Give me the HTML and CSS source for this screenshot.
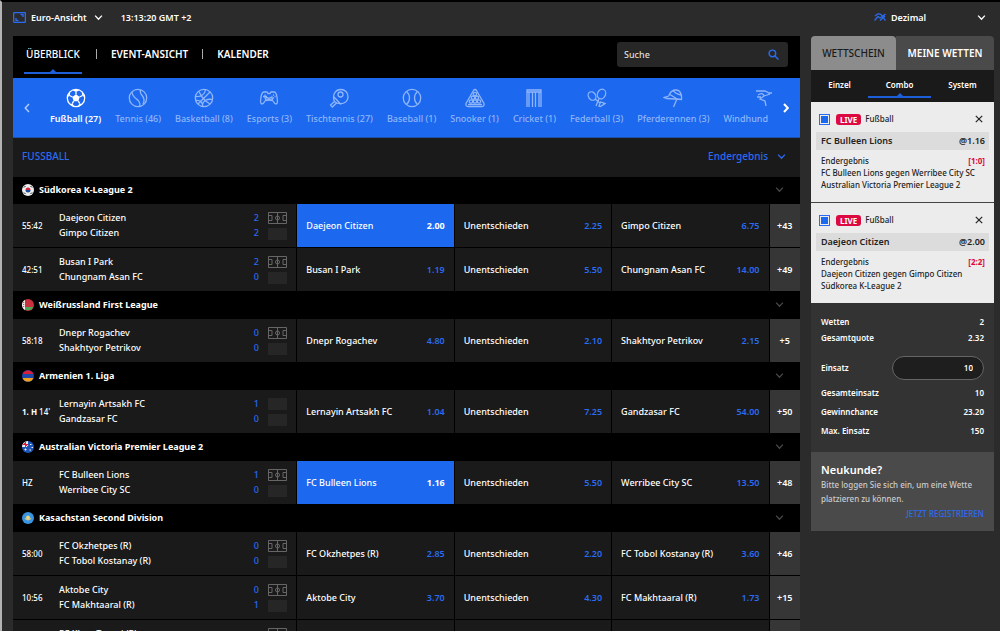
FILE: index.html
```html
<!DOCTYPE html>
<html lang="de">
<head>
<meta charset="utf-8">
<title>Sportwetten – Überblick</title>
<link rel="stylesheet" href="styles.css">
</head>
<body>
<svg class="sprite" aria-hidden="true">
  <symbol id="chev-down" viewBox="0 0 8 8"><path d="M1 2.3l3 3.2 3-3.2"/></symbol>
  <symbol id="close" viewBox="0 0 8 8"><path d="M.8.8l6.4 6.4M7.2.8L.8 7.2"/></symbol>
  <symbol id="pitch" viewBox="0 0 19 12"><path d="M.5.5h18v11H.5zM9.500.5v11M.5 3.500h3.500v5H.5M18.500 3.500H15v5h3.500M7.500 6a2 2 0 1 0 4 0a2 2 0 1 0-4 0"/></symbol>
</svg>
<div class="app">
  <header class="topbar">
    <button class="view-switch">
      <svg class="view-icon" viewBox="0 0 13 11"><rect x=".6" y=".6" width="11.800" height="9.800" rx="1"/><path d="M3 6v2.500h2.500M10 5V2.500H7.500"/></svg>
      Euro-Ansicht
      <svg class="chev"><use href="#chev-down"/></svg>
    </button>
    <time class="clock">13:13:20 GMT +2</time>
    <button class="odds-switch">
      <svg class="odds-icon" viewBox="0 0 12 8"><path d="M.5 7.500L4 3.500l2 1.500 5.500-4M1 3l2.500-2c3-.5 4.500 1 5.500 3.500l2.500 3M6 7.500L11 3"/></svg>
      Dezimal
      <svg class="chev"><use href="#chev-down"/></svg>
    </button>
  </header>

  <div class="columns">
    <main class="board">
      <div class="board-nav">
        <nav class="tabs">
          <a class="tab active" href="#">ÜBERBLICK</a>
          <a class="tab" href="#">EVENT-ANSICHT</a>
          <a class="tab" href="#">KALENDER</a>
        </nav>
        <label class="search">
          <input type="text" placeholder="Suche" aria-label="Suche">
          <svg viewBox="0 0 10 10"><circle cx="4" cy="4" r="3"/><path d="M6.300 6.300L9.500 9.500"/></svg>
        </label>
      </div>

      <div class="sports">
        <button class="arrow" aria-label="Zurück"><svg viewBox="0 0 6 10"><path d="M5 1L1.200 5 5 9"/></svg></button>
        <div class="sport-list">
          <button class="sport active"><svg viewBox="0 0 20 20"><circle cx="10" cy="10" r="8.700"/><path class="fill" d="M10 6.200l3.700 2.700-1.400 4.300H7.700L6.300 8.900zM6.500 2.200L10 4l3.500-1.800A9 9 0 0 0 6.500 2.200M1.300 9.500l2.500-2 .5-3.500a9 9 0 0 0-3 5.500M18.700 9.500l-2.500-2-.5-3.500a9 9 0 0 1 3 5.500M3.300 15.500l3.500.4 1.500 2.600a9 9 0 0 1-5-3M16.700 15.500l-3.500.4-1.500 2.600a9 9 0 0 0 5-3"/><path d="M10 6.500V4M13.500 9l3-1.500M12.300 13.200l1.500 2.500M7.700 13.200l-1.500 2.500M6.500 9l-3-1.500"/></svg>Fußball (27)</button>
          <button class="sport"><svg viewBox="0 0 20 20"><circle cx="10" cy="10" r="8.700"/><path d="M4 4c0 5 5 6.500 7 9.500 1 1.500 1 3.500.5 5M12.500 1.800c-1 3 .5 4.500 2 6.200 2 2.500 1.500 6 .5 8"/></svg>Tennis (46)</button>
          <button class="sport"><svg viewBox="0 0 20 20"><circle cx="10" cy="10" r="8.700"/><path d="M4 16L16 4M1.500 8.500C7 9 11 6.500 11.500 1.500M8.500 18.500C8 13 13 10.500 18.700 11.500M5 3.500c2 5 5 9 11 12.500M1.500 12.500C6 12 8.500 14 9 18.500"/></svg>Basketball (8)</button>
          <button class="sport"><svg viewBox="0 0 20 20"><path d="M5 4h3l1 1.500h2L12 4h3c2 0 2.500 2 3 5 .5 3.500 1 7-1 7s-2.500-3.500-4-4H7c-1.500.5-2 4-4 4s-1.500-3.500-1-7c.5-3 1-5 3-5zM6 6.500v4M4 8.500h4M12.500 8.500h1M15.500 8.500h1M14 7h1M14 10h1"/><circle cx="8" cy="11" r="1.500"/><circle cx="12" cy="11" r="1.500"/></svg>Esports (3)</button>
          <button class="sport"><svg viewBox="0 0 20 20"><path d="M5.500 13.500C3 8 5.500 1.500 12 1.500c4 0 7 3 7 7 0 6-6 8.500-11 6.500zM5.500 13.500l-4 3.500 1.800 2L7.500 15M5 9l7 7.500"/><circle cx="11.500" cy="6.500" r="2.500"/></svg>Tischtennis (27)</button>
          <button class="sport"><svg viewBox="0 0 20 20"><circle cx="10" cy="10" r="8.700"/><path d="M4.500 3.500c4 3.500 4 9.500 0 13M15.500 3.500c-4 3.500-4 9.500 0 13"/></svg>Baseball (1)</button>
          <button class="sport"><svg viewBox="0 0 20 20"><path d="M8.500 2.500Q10 .5 11.500 2.500l7.500 13q.5 3-2 3H3q-2.500 0-2-3z"/><circle cx="10" cy="6" r="1.700"/><circle cx="8" cy="9.700" r="1.700"/><circle cx="12" cy="9.700" r="1.700"/><circle cx="6" cy="13.500" r="1.700"/><circle cx="10" cy="13.500" r="1.700"/><circle cx="14" cy="13.500" r="1.700"/><path d="M3 16.500h14"/></svg>Snooker (1)</button>
          <button class="sport"><svg viewBox="0 0 20 20"><path d="M3 19V2h14v17M5 19V4M8.500 19V4M11.500 19V4M15 19V4M3 4h14"/></svg>Cricket (1)</button>
          <button class="sport"><svg viewBox="0 0 20 20"><ellipse cx="5" cy="8" rx="3.500" ry="4.500" transform="rotate(-35 5 8)"/><ellipse cx="14.500" cy="6" rx="4" ry="5" transform="rotate(25 14.500 6)"/><path d="M8 11l5 4M12 10.500L9 18M12 18l1.500-4 4.500 1.500-4.500 3zM15.500 14l2 3"/></svg>Federball (3)</button>
          <button class="sport"><svg viewBox="0 0 20 20"><path d="M1 9.500c2-1 4-.5 5-2C7.500 3 10 2 13 2c4 0 6 4 5.500 9.500L4 10.500zM10 2c1 2.500 3 4 8 5M7 6.500l7 4.500-3.500 8M14 11l4 .5"/></svg>Pferderennen (3)</button>
          <button class="sport clipped"><svg viewBox="0 0 20 20"><path d="M1 3h9l4 2h3M3 7c3-2 5-2 6 1l-4 3 5 2 1 5M2 9h4M9 8l6-2"/></svg>Windhund</button>
        </div>
        <button class="arrow next" aria-label="Weiter"><svg viewBox="0 0 6 10"><path d="M1 1l3.800 4L1 9"/></svg></button>
      </div>

      <div class="section-head">
        <h1>FUSSBALL</h1>
        <button class="market">Endergebnis <svg class="chev"><use href="#chev-down"/></svg></button>
      </div>

      <section>
        <h2 class="league"><svg class="flag" viewBox="0 0 12 12"><circle cx="6" cy="6" r="6" fill="#eee"/><path d="M3.500 6a2.500 2.500 0 0 1 5 0z" fill="#d2233c"/><path d="M3.500 6a2.500 2.500 0 0 0 5 0z" fill="#1b4d9c"/><path d="M2 3.500L3.500 2M8.500 2L10 3.500M2 8.500L3.500 10M8.500 10L10 8.500" stroke="#222" stroke-width="1"/></svg>Südkorea K-League 2<svg class="chev"><use href="#chev-down"/></svg></h2>
        <div class="match">
          <div class="info"><span class="time">55:42</span><span class="teams">Daejeon Citizen<br>Gimpo Citizen</span><span class="score">2<br>2</span><span class="media"><svg><use href="#pitch"/></svg><i></i></span></div>
          <button class="odd picked">Daejeon Citizen <b>2.00</b></button><button class="odd">Unentschieden <b>2.25</b></button><button class="odd">Gimpo Citizen <b>6.75</b></button><button class="more">+43</button>
        </div>
        <div class="match">
          <div class="info"><span class="time">42:51</span><span class="teams">Busan I Park<br>Chungnam Asan FC</span><span class="score">2<br>0</span><span class="media"><svg><use href="#pitch"/></svg><i></i></span></div>
          <button class="odd">Busan I Park <b>1.19</b></button><button class="odd">Unentschieden <b>5.50</b></button><button class="odd">Chungnam Asan FC <b>14.00</b></button><button class="more">+49</button>
        </div>
      </section>

      <section>
        <h2 class="league"><svg class="flag" viewBox="0 0 12 12"><circle cx="6" cy="6" r="6" fill="#c8313e"/><path d="M.7 8h10.600A6 6 0 0 1 .7 8z" fill="#4aa657"/><path d="M3 .8v10.400A6 6 0 0 1 3 .8z" fill="#eee"/><path d="M1.700 3v6" stroke="#c8313e" stroke-dasharray="1 1"/></svg>Weißrussland First League<svg class="chev"><use href="#chev-down"/></svg></h2>
        <div class="match">
          <div class="info"><span class="time">58:18</span><span class="teams">Dnepr Rogachev<br>Shakhtyor Petrikov</span><span class="score">0<br>0</span><span class="media"><svg><use href="#pitch"/></svg><i></i></span></div>
          <button class="odd">Dnepr Rogachev <b>4.80</b></button><button class="odd">Unentschieden <b>2.10</b></button><button class="odd">Shakhtyor Petrikov <b>2.15</b></button><button class="more">+5</button>
        </div>
      </section>

      <section>
        <h2 class="league"><svg class="flag" viewBox="0 0 12 12"><circle cx="6" cy="6" r="6" fill="#1e47a8"/><path d="M.5 4a6 6 0 0 1 11 0z" fill="#d81e3a"/><path d="M.5 8a6 6 0 0 0 11 0z" fill="#f2a01e"/></svg>Armenien 1. Liga<svg class="chev"><use href="#chev-down"/></svg></h2>
        <div class="match">
          <div class="info"><span class="time"><b>1. H</b> 14'</span><span class="teams">Lernayin Artsakh FC<br>Gandzasar FC</span><span class="score">1<br>0</span><span class="media"><i></i><i></i></span></div>
          <button class="odd">Lernayin Artsakh FC <b>1.04</b></button><button class="odd">Unentschieden <b>7.25</b></button><button class="odd">Gandzasar FC <b>54.00</b></button><button class="more">+50</button>
        </div>
      </section>

      <section>
        <h2 class="league"><svg class="flag" viewBox="0 0 12 12"><circle cx="6" cy="6" r="6" fill="#1d56b8"/><path d="M6 0v6H0a6 6 0 0 1 6-6z" fill="#eee"/><path d="M3.500 1v5M.5 3.500H6M2 2l4 4" stroke="#d81e3a"/><path d="M2.500 8.500h2M3.500 7.500v2M8 3.500h1.500M7.500 9H9M9.500 6.500H11" stroke="#eee"/></svg>Australian Victoria Premier League 2<svg class="chev"><use href="#chev-down"/></svg></h2>
        <div class="match">
          <div class="info"><span class="time">HZ</span><span class="teams">FC Bulleen Lions<br>Werribee City SC</span><span class="score">1<br>0</span><span class="media"><svg><use href="#pitch"/></svg><i></i></span></div>
          <button class="odd picked">FC Bulleen Lions <b>1.16</b></button><button class="odd">Unentschieden <b>5.50</b></button><button class="odd">Werribee City SC <b>13.50</b></button><button class="more">+48</button>
        </div>
      </section>

      <section>
        <h2 class="league"><svg class="flag" viewBox="0 0 12 12"><circle cx="6" cy="6" r="6" fill="#3a94e0"/><circle cx="6" cy="5.500" r="2" fill="#ecd77a"/><path d="M2.800 6.500Q6 9.500 9.200 6.500" fill="none" stroke="#ecd77a"/></svg>Kasachstan Second Division<svg class="chev"><use href="#chev-down"/></svg></h2>
        <div class="match">
          <div class="info"><span class="time">58:00</span><span class="teams">FC Okzhetpes (R)<br>FC Tobol Kostanay (R)</span><span class="score">0<br>0</span><span class="media"><svg><use href="#pitch"/></svg><i></i></span></div>
          <button class="odd">FC Okzhetpes (R) <b>2.85</b></button><button class="odd">Unentschieden <b>2.20</b></button><button class="odd">FC Tobol Kostanay (R) <b>3.60</b></button><button class="more">+46</button>
        </div>
        <div class="match">
          <div class="info"><span class="time">10:56</span><span class="teams">Aktobe City<br>FC Makhtaaral (R)</span><span class="score">0<br>1</span><span class="media"><svg><use href="#pitch"/></svg><i></i></span></div>
          <button class="odd">Aktobe City <b>3.70</b></button><button class="odd">Unentschieden <b>4.30</b></button><button class="odd">FC Makhtaaral (R) <b>1.73</b></button><button class="more">+15</button>
        </div>
        <div class="match">
          <div class="info"><span class="time"></span><span class="teams">FC Khan Tengri (R)<br>&nbsp;</span><span class="score"></span><span class="media"><svg><use href="#pitch"/></svg><i></i></span></div>
          <button class="odd"></button><button class="odd"></button><button class="odd"></button><button class="more"></button>
        </div>
      </section>
    </main>

    <aside class="slip">
      <div class="slip-tabs">
        <button class="slip-tab current">WETTSCHEIN</button>
        <button class="slip-tab">MEINE WETTEN</button>
      </div>
      <div class="modes">
        <button class="mode">Einzel</button>
        <button class="mode active">Combo</button>
        <button class="mode">System</button>
      </div>

      <article class="bet">
        <div class="bet-head"><input type="checkbox" id="bet-1" checked><span class="live">LIVE</span><label for="bet-1">Fußball</label><button class="remove" aria-label="Entfernen"><svg><use href="#close"/></svg></button></div>
        <div class="pick"><span>FC Bulleen Lions</span><span>@1.16</span></div>
        <div class="bet-market"><span>Endergebnis</span><b>[1:0]</b></div>
        <p>FC Bulleen Lions gegen Werribee City SC<br>Australian Victoria Premier League 2</p>
      </article>
      <article class="bet">
        <div class="bet-head"><input type="checkbox" id="bet-2" checked><span class="live">LIVE</span><label for="bet-2">Fußball</label><button class="remove" aria-label="Entfernen"><svg><use href="#close"/></svg></button></div>
        <div class="pick"><span>Daejeon Citizen</span><span>@2.00</span></div>
        <div class="bet-market"><span>Endergebnis</span><b>[2:2]</b></div>
        <p>Daejeon Citizen gegen Gimpo Citizen<br>Südkorea K-League 2</p>
      </article>

      <div class="totals">
        <div class="line"><span>Wetten</span><span>2</span></div>
        <div class="line"><span>Gesamtquote</span><span>2.32</span></div>
        <div class="stake"><label for="stake">Einsatz</label><input id="stake" type="text" value="10"></div>
        <div class="line tall"><span>Gesamteinsatz</span><span>10</span></div>
        <div class="line tall"><span>Gewinnchance</span><span>23.20</span></div>
        <div class="line tall"><span>Max. Einsatz</span><span>150</span></div>
      </div>

      <div class="signup">
        <h3>Neukunde?</h3>
        <p>Bitte loggen Sie sich ein, um eine Wette platzieren zu können.</p>
        <a href="#">JETZT REGISTRIEREN</a>
      </div>
    </aside>
  </div>
</div>
</body>
</html>
```
FILE: styles.css
```css
* { box-sizing: border-box; margin: 0; padding: 0; }
body {
  font-family: "Noto Sans", "Open Sans", sans-serif;
  font-size: 9px;
  font-weight: 500;
  line-height: 15px;
  color: #fff;
  background: #2b2b2b;
}
button, input { font: inherit; color: inherit; background: none; border: 0; }
button { cursor: pointer; }
a { color: inherit; text-decoration: none; }
svg { display: block; flex: none; fill: none; stroke: currentColor; }
.flag { stroke: none; width: 12px; height: 12px; }
.sprite { position: absolute; width: 0; height: 0; }
.chev { width: 9px; height: 9px; stroke-width: 1.2; }

.app {
  height: 100vh;
  overflow: hidden;
  border-top: 2px solid #000;
  border-left: 2px solid #b4b4b4;
}

.topbar { display: flex; align-items: center; height: 34px; padding: 0 14px 4px 11px; font-weight: 600; }
.view-switch, .odds-switch { display: flex; align-items: center; }
.view-icon { width: 13px; height: 11px; margin-right: 5px; color: #2a6bf0; stroke-width: 1.4; }
.view-switch .chev { margin-left: 7px; }
.clock { margin-left: 18px; }
.odds-switch { width: 112px; margin-left: auto; }
.odds-icon { width: 12px; height: 8px; margin-right: 5px; color: #2a6bf0; stroke-width: 1.3; }
.odds-switch .chev { margin-left: auto; }

.columns { display: flex; align-items: flex-start; gap: 11px; padding: 0 6px 0 11px; }
.board { flex: 1; min-width: 0; background: #1a1a1a; }

.board-nav { display: flex; justify-content: space-between; height: 42px; padding: 6px 12px 0 11px; background: #000; }
.tabs { display: flex; font-size: 10px; font-weight: 600; line-height: 24px; }
.tab { display: flex; }
.tab + .tab::before { content: ""; width: 1px; height: 10px; margin: 7px 14px 0; background: #aaa; }
.tab.active { position: relative; height: 32px; padding: 0 2px; font-weight: 500; border-bottom: 2px solid #1c5fd8; }
.tab.active::after, .mode.active::after {
  content: ""; position: absolute; left: 50%; bottom: 0; margin-left: -3px;
  border: 3px solid transparent; border-top: 0; border-bottom-color: #1c5fd8;
}
.search { display: flex; align-items: center; width: 171px; height: 25px; padding: 0 9px 0 7px; border-radius: 3px; background: #272727; }
.search input { flex: 1; min-width: 0; outline: 0; }
.search input::placeholder { color: #ddd; opacity: 1; }
.search svg { width: 11px; height: 11px; color: #2a6bf0; stroke-width: 1.3; }

.sports { display: flex; align-items: center; height: 60px; padding: 0 9px; background: #1c68ee; border-bottom: 1px solid #1b4fa8; }
.arrow { flex: none; width: 10px; color: #bcd3ff; }
.arrow svg { width: 6px; height: 10px; margin: auto; stroke-width: 1.3; }
.arrow.next { color: #fff; }
.arrow.next svg { stroke-width: 2; }
.sport-list { flex: 1; min-width: 0; display: flex; gap: 14px; padding-left: 18px; margin-right: 8px; overflow: hidden; }
.sport { flex: none; white-space: nowrap; color: #8fb6fb; line-height: 17px; }
.sport.active { color: #fff; font-weight: 600; }
.sport.clipped { width: 84px; text-align: left; }
.sport svg { width: 20px; height: 20px; margin: 0 auto 2px; stroke-width: 1.3; }
.fill { fill: currentColor; stroke: none; }

.section-head { display: flex; align-items: center; justify-content: space-between; height: 39px; padding: 0 14px 2px 9px; color: #2a6bf0; font-size: 10px; }
.section-head h1 { font-size: 10px; font-weight: 500; }
.market { display: flex; align-items: center; gap: 9px; }

.league { display: flex; align-items: center; gap: 5px; height: 27px; padding: 0 16px 2px 9px; font-size: 9px; font-weight: 700; background: #000; }
.league .chev { margin-left: auto; color: #484848; }

.match { display: grid; grid-template-columns: 36fr repeat(3, 20fr) 4fr; height: 44px; border-bottom: 1px solid #000; }
.match > * + * { border-left: 1px solid #000; }
.info { display: flex; align-items: center; padding: 0 9px; min-width: 0; }
.time { width: 37px; font-size: 8px; }
.teams { flex: 1; padding-bottom: 2px; }
.score { width: 12px; padding-bottom: 2px; text-align: center; color: #2a6bf0; }
.media { display: grid; gap: 4px; margin-left: 6px; color: #666; }
.media svg, .media i { width: 19px; height: 12px; }
.media i { background: #262626; }
.odd { display: flex; align-items: center; justify-content: space-between; min-width: 0; padding: 0 9px; white-space: nowrap; }
.odd b { color: #2a6bf0; font-weight: 600; }
.odd.picked { background: #1c68ee; }
.odd.picked b { color: #fff; font-weight: 700; }
.more { background: #363636; font-weight: 600; }

.slip { flex: 0 0 183px; }
.slip-tabs { display: grid; grid-template-columns: 85fr 98fr; height: 34px; font-size: 10px; }
.slip-tab { background: #4a4a4a; font-weight: 600; border-radius: 0 4px 0 0; }
.slip-tab.current { color: #1a1a1a; background: #8c8c8c; font-weight: 500; border-radius: 4px 4px 0 0; }
.modes { display: grid; grid-template-columns: 57fr 63fr 63fr; height: 32px; background: #1a1a1a; }
.mode { position: relative; height: 28px; font-size: 8px; font-weight: 600; }
.mode.active { border-bottom: 2px solid #1c5fd8; padding-top: 2px; }

.bet { padding: 7px 5px 11px; background: #ececec; color: #222; font-size: 8px; line-height: 12px; }
.bet + .bet { border-top: 1px solid #444; }
.bet-head { display: flex; align-items: center; height: 20px; padding: 0 6px 0 3px; }
.bet-head input { appearance: none; width: 11px; height: 11px; border: 1px solid #2a6bf0; background: #1c68ee; box-shadow: inset 0 0 0 1px #ececec; }
.live { margin: 0 4px 0 6px; padding: 0 4px; border-radius: 3px; background: #dc0a40; color: #fff; font-weight: 700; line-height: 11px; }
.remove { margin-left: auto; }
.remove svg { width: 8px; height: 8px; stroke-width: 1.2; }
.pick { display: flex; justify-content: space-between; margin-top: 3px; padding: 0 4px 0 5px; font-size: 9px; font-weight: 600; line-height: 18px; background: #dcdcdc; }
.bet-market { display: flex; justify-content: space-between; margin-top: 4px; padding: 0 4px 0 5px; line-height: 13px; }
.bet-market b { color: #dc0a40; }
.bet p { padding: 0 0 0 5px; white-space: nowrap; }

.totals { padding: 11px 10px 12px; background: #333; font-weight: 600; font-size: 8px; }
.line { display: flex; justify-content: space-between; line-height: 16px; }
.line.tall { line-height: 19px; }
.stake { display: flex; align-items: center; justify-content: space-between; height: 31px; margin-top: 6px; }
.stake input { width: 92px; height: 24px; padding: 0 10px; border: 1px solid #666; border-radius: 12px; background: #1e1e1e; text-align: right; }

.signup { padding: 9px 10px 10px; background: #4a4a4a; color: #ccc; }
.signup h3 { font-size: 11px; font-weight: 600; line-height: 17px; color: #fff; }
.signup p { font-size: 8px; line-height: 14px; }
.signup a { display: block; text-align: right; color: #2a6bf0; font-size: 8px; line-height: 15px; }
```
